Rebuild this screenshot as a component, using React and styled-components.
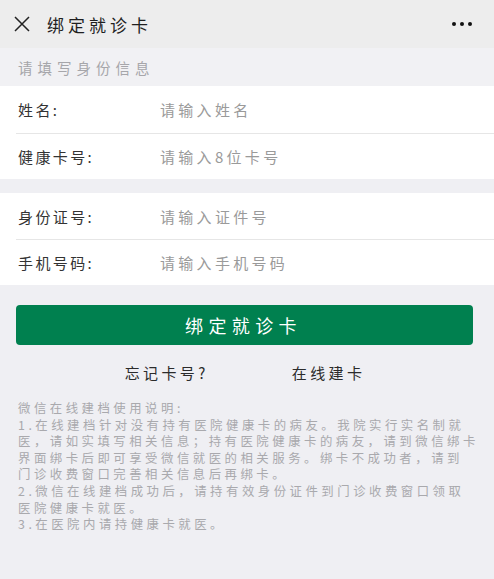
import React from 'react'
import styled, { createGlobalStyle } from 'styled-components'

const GlobalStyle = createGlobalStyle`
    * { box-sizing: border-box; }
    body {
        margin: 0;
        background: #efeff3;
        font-family: "Noto Sans CJK SC", "Noto Sans", sans-serif;
    }
`;

const Page = styled.div`
    width: 494px;
    min-height: 579px;
    background: #efeff3;
    overflow: hidden;
`;

const TopBar = styled.header`
    height: 48px;
    background: #ededed;
    display: flex;
    align-items: center;
    padding: 0 22px 0 13px;
`;

const Title = styled.h1`
    margin: 0 0 0 16px;
    flex: 1;
    font-size: 17px;
    font-weight: 400;
    letter-spacing: 4px;
    color: #1f1f1f;
`;

const Dots = styled.div`
    display: flex;
    gap: 3.5px;
    span {
        width: 4.5px;
        height: 4.5px;
        border-radius: 50%;
        background: #111;
    }
`;

const SectionLabel = styled.div`
    height: 38px;
    display: flex;
    align-items: center;
    padding-left: 18px;
    font-size: 14.5px;
    letter-spacing: 5px;
    color: #a6a6aa;
    background: #f1f1f4;
`;

const Panel = styled.div`
    background: #fff;
    margin-bottom: ${({ gap }) => gap}px;
`;

const RowWrap = styled.div`
    margin-left: ${({ first }) => (first ? '0' : '16px')};
    border-top: ${({ first }) => (first ? 'none' : '1px solid #e6e6e6')};
`;

const Row = styled.div`
    height: ${({ h }) => h}px;
    display: flex;
    align-items: center;
    padding-left: ${({ first }) => (first ? '18px' : '2px')};
`;

const Label = styled.span`
    width: 142px;
    font-size: 15px;
    letter-spacing: 2.4px;
    color: #333;
`;

const Placeholder = styled.span`
    font-size: 15px;
    letter-spacing: 3.3px;
    color: #9a9a9a;
`;

const ButtonWrap = styled.div`
    padding: 0 21px 0 16px;
`;

const BindButton = styled.button`
    width: 100%;
    height: 40px;
    border: none;
    border-radius: 4px;
    background: #00804f;
    color: #fff;
    font-family: inherit;
    font-size: 18px;
    letter-spacing: 5.4px;
    padding-left: 4px;
`;

const Links = styled.div`
    height: 55px;
    display: flex;
    justify-content: center;
    align-items: center;
    gap: 83px;
    padding-right: 4px;
`;

const LinkText = styled.span`
    font-size: 15px;
    letter-spacing: 3.4px;
    color: #2b2b2b;
`;

const Notes = styled.div`
    padding: 0 0 0 18px;
    font-size: 12.4px;
    line-height: 16.6px;
    letter-spacing: 3.5px;
    color: #a9a9ad;
`;

const NoteLine = styled.div`
    white-space: nowrap;
    height: 16.6px;
`;

function CloseIcon() {
    return (
        <svg width="18" height="18" viewBox="0 0 18 18">
            <path d="M2 2 L16 16 M16 2 L2 16" stroke="#222" strokeWidth="1.5" fill="none" />
        </svg>
    )
}

const rows1 = [
    { label: '姓名:', hint: '请输入姓名', h: 47 },
    { label: '健康卡号:', hint: '请输入8位卡号', h: 45 },
];

const rows2 = [
    { label: '身份证号:', hint: '请输入证件号', h: 46 },
    { label: '手机号码:', hint: '请输入手机号码', h: 45 },
];

const notes = [
    '微信在线建档使用说明:',
    '1.在线建档针对没有持有医院健康卡的病友。我院实行实名制就',
    '医，请如实填写相关信息；持有医院健康卡的病友，请到微信绑卡',
    '界面绑卡后即可享受微信就医的相关服务。绑卡不成功者，请到',
    '门诊收费窗口完善相关信息后再绑卡。',
    '2.微信在线建档成功后，请持有效身份证件到门诊收费窗口领取',
    '医院健康卡就医。',
    '3.在医院内请持健康卡就医。',
];

function FormPanel({ rows, gap }) {
    return (
        <Panel gap={gap}>
            {rows.map((r, i) => (
                <RowWrap key={r.label} first={i === 0}>
                    <Row first={i === 0} h={r.h}>
                        <Label>{r.label}</Label>
                        <Placeholder>{r.hint}</Placeholder>
                    </Row>
                </RowWrap>
            ))}
        </Panel>
    )
}

export default function App() {
    return (
        <Page>
            <GlobalStyle />
            <TopBar>
                <CloseIcon />
                <Title>绑定就诊卡</Title>
                <Dots><span /><span /><span /></Dots>
            </TopBar>
            <SectionLabel>请填写身份信息</SectionLabel>
            <FormPanel rows={rows1} gap={14} />
            <FormPanel rows={rows2} gap={20} />
            <ButtonWrap>
                <BindButton>绑定就诊卡</BindButton>
            </ButtonWrap>
            <Links>
                <LinkText>忘记卡号?</LinkText>
                <LinkText>在线建卡</LinkText>
            </Links>
            <Notes>
                {notes.map((n) => <NoteLine key={n}>{n}</NoteLine>)}
            </Notes>
        </Page>
    )
}
